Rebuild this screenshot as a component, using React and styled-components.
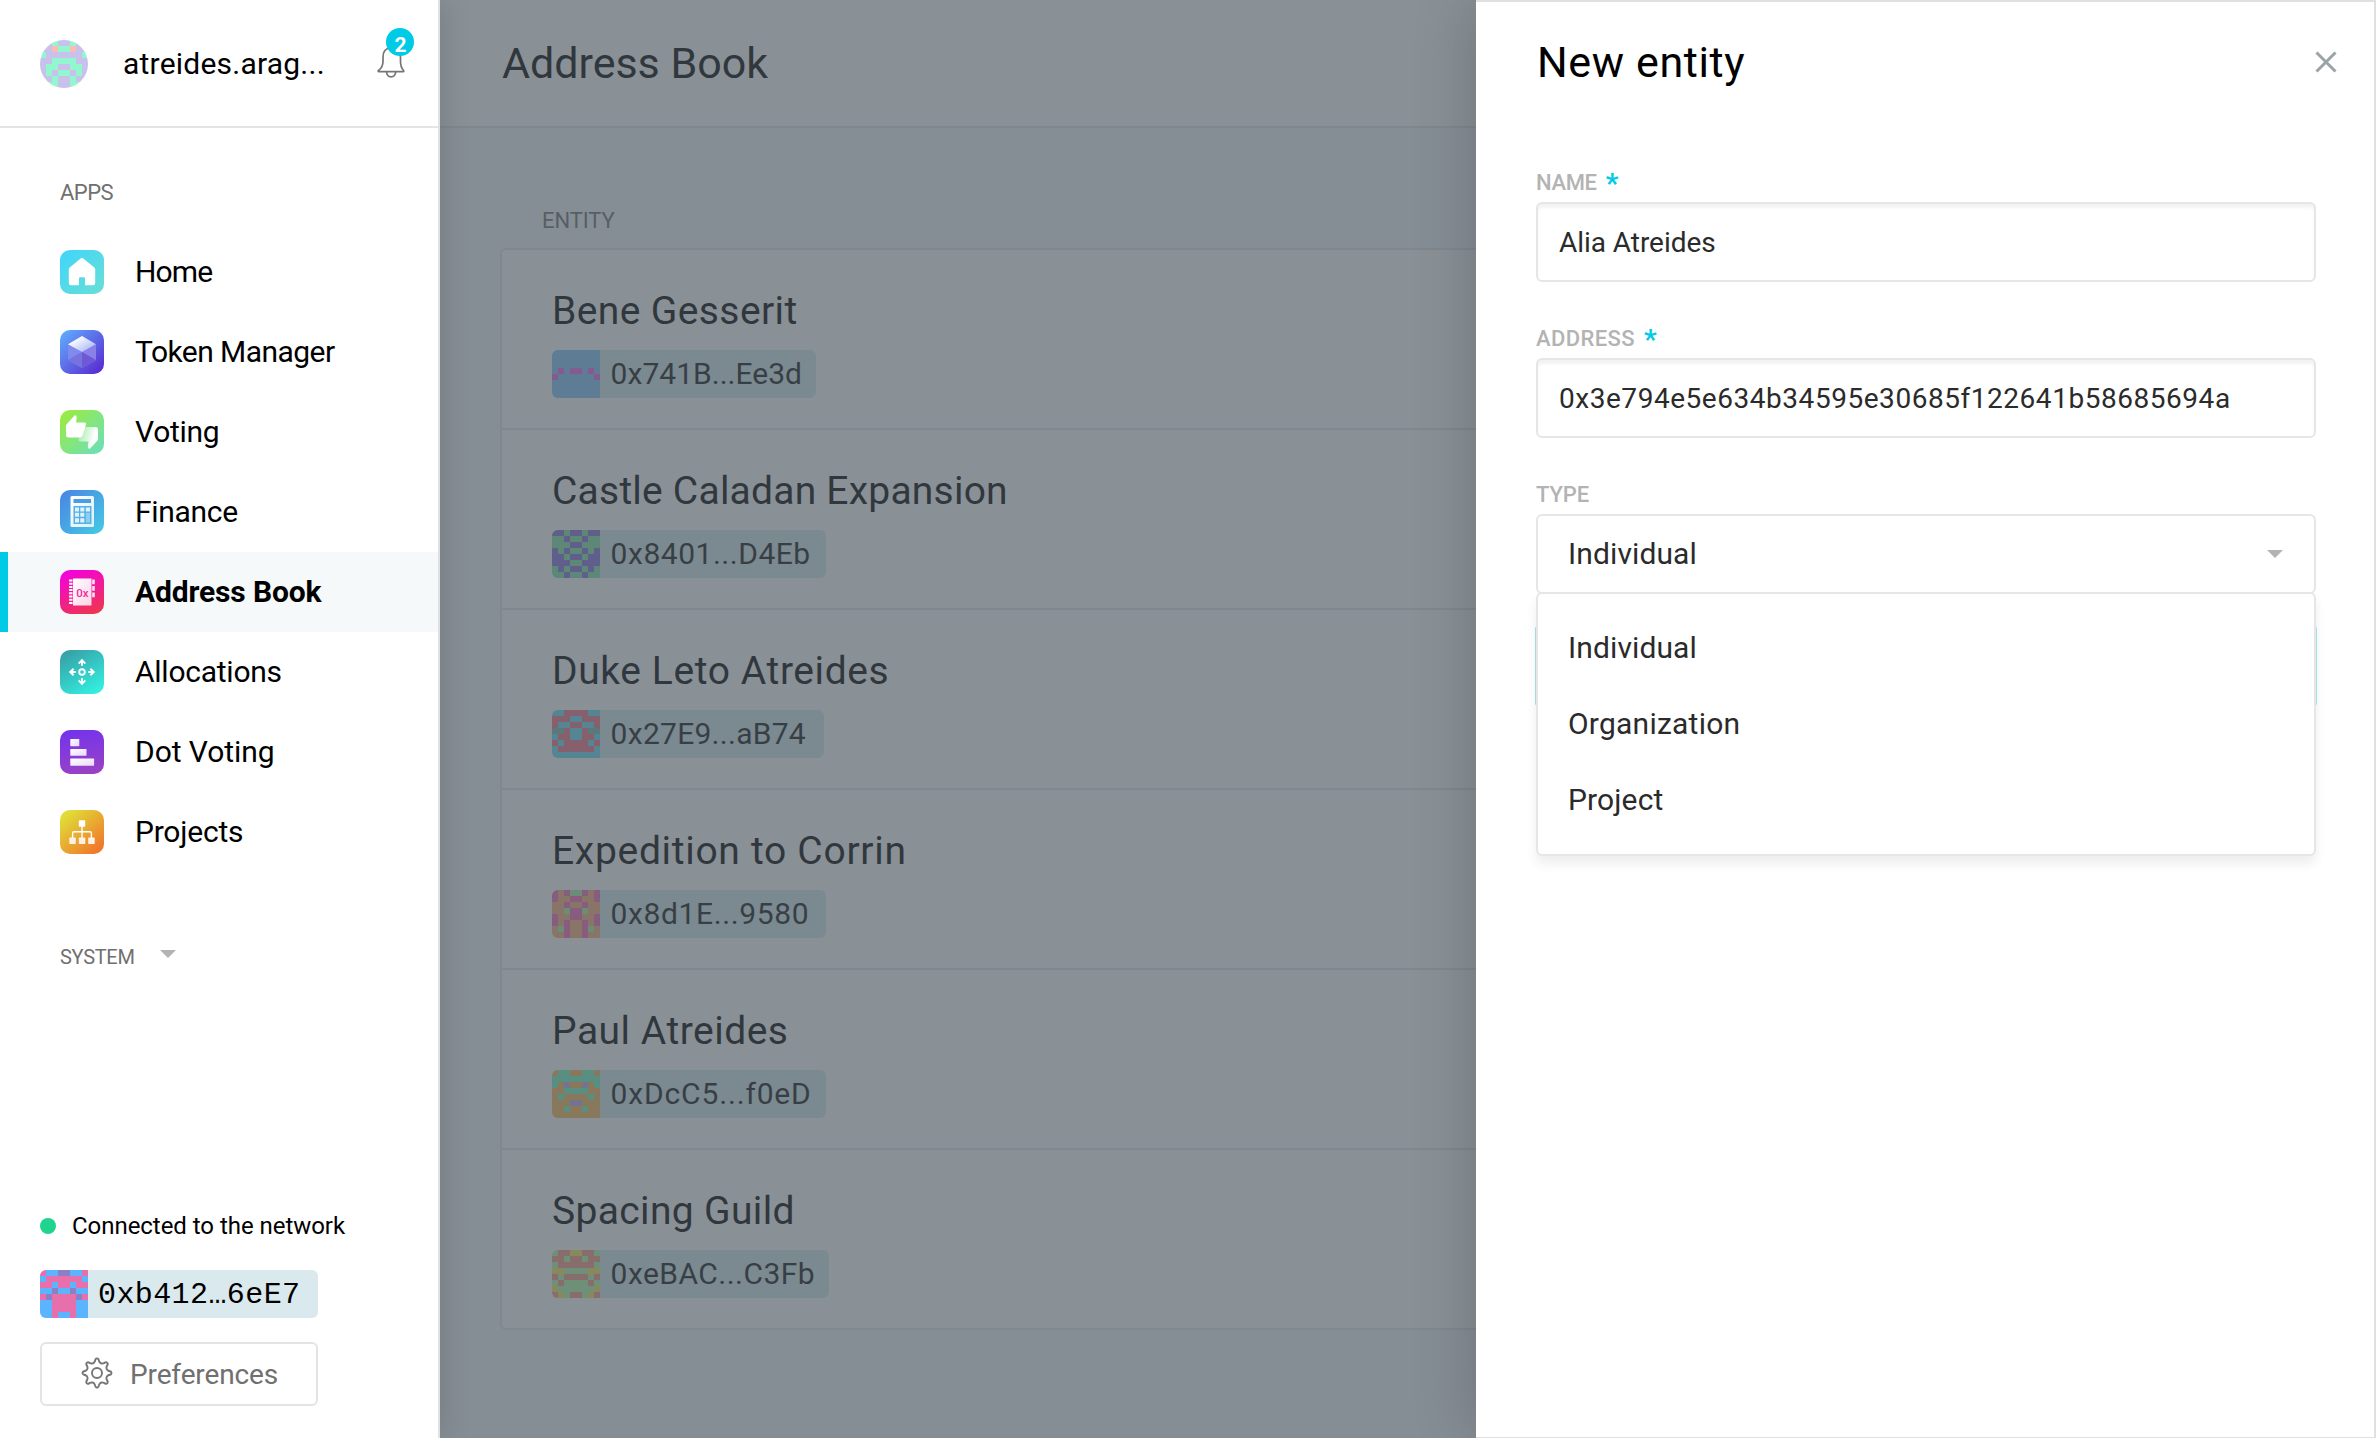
import React from "react";
import styled, { createGlobalStyle, css } from "styled-components";

const ACCENT = "#00cbe6";

const GlobalStyle = createGlobalStyle`
  * { box-sizing: border-box; }
  body {
    margin: 0;
    background: #fff;
    font-family: Roboto, "Liberation Sans", sans-serif;
    color: #000;
  }
`;

const Shell = styled.div`
  position: relative;
  display: flex;
  width: 2376px;
  height: 1438px;
  overflow: hidden;
`;

/* ---------- sidebar ---------- */

const Sidebar = styled.aside`
  position: relative;
  z-index: 2;
  flex: none;
  display: flex;
  flex-direction: column;
  width: 440px;
  background: #fff;
  border-right: 2px solid #dfe1e2;
  box-shadow: 2px 0 30px rgba(0, 0, 0, 0.13);
`;

const OrgBar = styled.header`
  flex: none;
  display: flex;
  align-items: center;
  height: 128px;
  padding: 2px 30px 0 40px;
  border-bottom: 2px solid #e3e4e4;
`;

const Avatar = styled.div`
  display: flex;
  width: 48px;
  height: 48px;
  margin-right: 35px;
  border-radius: 50%;
  overflow: hidden;
`;

const OrgName = styled.span`
  flex: 1;
  font-size: 30px;
  line-height: 40px;
  letter-spacing: 0.22px;
`;

const BellButton = styled.div`
  position: relative;
  display: flex;
  width: 30px;
  height: 34px;
  margin-right: 2px;
`;

const Count = styled.span`
  position: absolute;
  left: 10px;
  top: -19px;
  width: 28px;
  height: 28px;
  padding-top: 6px;
  padding-left: 1px;
  border-radius: 50%;
  background: ${ACCENT};
  color: #fff;
  font-size: 21px;
  font-weight: 700;
  line-height: 22px;
  text-align: center;
`;

const SectionTitle = styled.h2`
  display: flex;
  align-items: center;
  gap: 26px;
  margin: 0;
  padding-left: 60px;
  color: #707070;
  font-size: ${(p) => p.$size}px;
  font-weight: 400;
  line-height: 28px;
  letter-spacing: ${(p) => p.$ls}px;

  svg {
    margin: 0 0 7px -1px;
  }
`;

const AppsHead = styled.div`
  padding: 51px 0 25px;
`;

const SystemHead = styled.div`
  padding-top: 71px;
`;

const MenuItem = styled.a`
  display: flex;
  align-items: center;
  gap: 31px;
  height: 80px;
  padding-left: 60px;
  font-size: 30px;
  letter-spacing: ${(p) => p.$ls}px;
  ${(p) =>
    p.$active &&
    css`
      background: #f5f9fa;
      box-shadow: inset 8px 0 ${ACCENT};
      font-weight: 700;
    `}
`;

const MenuLabel = styled.span`
  padding-bottom: 2px;
`;

const Footer = styled.div`
  display: flex;
  flex-direction: column;
  align-items: flex-start;
  margin-top: auto;
  padding: 0 0 32px 40px;
`;

const Status = styled.div`
  display: flex;
  align-items: center;
  gap: 16px;
  height: 32px;
  font-size: 24px;
  letter-spacing: -0.04px;

  &::before {
    content: "";
    width: 16px;
    height: 16px;
    border-radius: 50%;
    background: #21d48e;
  }
`;

const Account = styled.div`
  display: flex;
  align-items: center;
  width: 278px;
  height: 48px;
  margin: 28px 0 24px;
  border-radius: 6px;
  overflow: hidden;
  background: #dae9ee;
  font-family: "Liberation Mono", monospace;
  font-size: 30px;
  letter-spacing: 0.4px;
`;

const AccountText = styled.span`
  padding: 2px 0 0 10px;
`;

const Preferences = styled.button`
  display: flex;
  align-items: center;
  gap: 17px;
  width: 278px;
  height: 64px;
  padding: 0 0 0 39px;
  border: 2px solid #e4e4e4;
  border-radius: 6px;
  background: #fff;
  color: #707070;
  font-family: inherit;
  font-size: 28px;
  letter-spacing: -0.13px;

  svg {
    margin-bottom: 2px;
  }
`;

/* ---------- main ---------- */

const Main = styled.main`
  position: relative;
  flex: 1;
  display: flex;
  flex-direction: column;
  background: #f7f9fb;
`;

const PageBar = styled.header`
  display: flex;
  align-items: center;
  height: 128px;
  padding-left: 62px;
  border-bottom: 2px solid #e3e7e7;
  background: #fff;
`;

const PageTitle = styled.h1`
  margin: 0;
  font-size: 43px;
  font-weight: 400;
  line-height: 60px;
  letter-spacing: -0.02px;
`;

const Listing = styled.section`
  padding: 77px 60px 0;
`;

const ColumnHead = styled.div`
  padding-left: 42px;
  height: 43px;
  color: #707070;
  font-size: 22px;
  line-height: 32px;
  letter-spacing: -0.1px;
`;

const Table = styled.div`
  border: 2px solid #e3e7e7;
  border-radius: 6px;
  background: #fff;
`;

const Entity = styled.div`
  display: flex;
  flex-direction: column;
  align-items: flex-start;
  height: 178px;
  padding: 37px 0 0 50px;

  & + & {
    height: 180px;
    border-top: 2px solid #e3e7e7;
  }
`;

const EntityName = styled.div`
  height: 63px;
  font-size: 39px;
  line-height: 48px;
  letter-spacing: ${(p) => p.$ls}px;
`;

const Badge = styled.div`
  display: flex;
  align-items: center;
  width: ${(p) => p.$w}px;
  height: 48px;
  border-radius: 6px;
  overflow: hidden;
  background: #d8eaee;
  color: #161616;
  font-size: 30px;
  letter-spacing: ${(p) => p.$ls}px;
  white-space: nowrap;
`;

const BadgeText = styled.span`
  padding: 0 0 2px 10.6px;
`;

const Backdrop = styled.div`
  position: absolute;
  inset: 0;
  background: rgba(74, 85, 94, 0.65);
`;

/* ---------- side panel ---------- */

const Panel = styled.section`
  position: absolute;
  z-index: 3;
  top: 0;
  right: 0;
  bottom: 0;
  width: 900px;
  padding: 0 58px 0 60px;
  background: #fff;
  border: solid #dfe0e1;
  border-width: 2px 2px 1px 0;
  box-shadow: 0 0 60px rgba(0, 0, 0, 0.2);
`;

const PanelBar = styled.header`
  display: flex;
  align-items: center;
  justify-content: space-between;
  height: 122px;
  margin: 0 -21px 0 1px;
  padding-bottom: 2px;
`;

const PanelTitle = styled.h2`
  margin: 0;
  font-size: 43px;
  font-weight: 400;
  line-height: 60px;
  letter-spacing: 0.63px;
`;

const Field = styled.div`
  position: relative;
  margin-top: ${(p) => p.$top}px;
`;

const Label = styled.label`
  display: flex;
  gap: 9px;
  height: 36px;
  padding: 2px 0 0;
  color: #b3b3b3;
  font-size: 22px;
  font-weight: 500;
  line-height: 30px;
  letter-spacing: ${(p) => p.$ls}px;
`;

const Required = styled.span`
  color: ${ACCENT};
  font-size: 28px;
  font-weight: 700;
  line-height: 32px;
`;

const Input = styled.div`
  display: flex;
  align-items: center;
  width: 780px;
  height: 80px;
  padding-left: 21px;
  border: 2px solid #e6e6e6;
  border-radius: 6px;
  background: #fff;
  box-shadow: inset 0 4px 3px rgba(0, 0, 0, 0.05);
  color: #2b2b2b;
  font-size: 28px;
  letter-spacing: ${(p) => p.$ls}px;
`;

const Select = styled.div`
  display: flex;
  align-items: center;
  justify-content: space-between;
  width: 780px;
  height: 80px;
  padding: 0 31px 1px 30px;
  border: 2px solid #e6e6e6;
  border-radius: 6px;
  background: #fff;
  color: #2b2b2b;
  font-size: 30px;
  letter-spacing: 0.11px;
`;

const Menu = styled.ul`
  position: absolute;
  left: 0;
  top: 114px;
  width: 780px;
  height: 264px;
  margin: 0;
  padding: 16px 0 0 30px;
  border: 2px solid #e6e6e6;
  border-radius: 6px;
  background: #fff;
  box-shadow: 0 8px 12px rgba(0, 0, 0, 0.07);
  list-style: none;
`;

const Option = styled.li`
  color: #2b2b2b;
  font-size: 30px;
  line-height: 76px;
  letter-spacing: ${(p) => p.$ls}px;
`;

const Submit = styled.div`
  height: 80px;
  margin: 32px -1px 0;
  border-radius: 3px;
  background: linear-gradient(130deg, #b0dfe8, #a0eced);
`;

/* ---------- drawings ---------- */

function Identicon({ rows, colors }) {
  return (
    <svg width="48" height="48" viewBox="0 0 48 48" shapeRendering="crispEdges">
      {rows.map((row, y) =>
        [...row, ...[...row].reverse()].map((c, x) => (
          <rect key={`${x}-${y}`} x={x * 6} y={y * 6} width="6" height="6" fill={colors[c]} />
        ))
      )}
    </svg>
  );
}

const Caret = () => (
  <svg width="16" height="8" viewBox="0 0 16 8">
    <path d="M0 0h16l-8 8z" fill="#b3b3b3" />
  </svg>
);

const Bell = () => (
  <svg width="30" height="34" viewBox="0 0 30 34" fill="none" stroke="#757575" strokeWidth="1.7" strokeLinejoin="round">
    <path d="M2.8 24.6h24.4c.6 0 .8-.7.4-1.100-2.600-2.400-3.100-5.500-3.100-9.200V10c0-5.200-3-9-8.200-9h-2.400C9.600 1.600 7 5 7 10v4.300c0 3.700-1.300 7-4.500 9.200-.6.400-.4 1.100.3 1.100z" />
    <path d="M10.500 24.800c.2 3 2 5 4.600 5s4.400-2 4.600-5" />
  </svg>
);

const gearPath = (() => {
  const shape = [
    [-22.5, 10.3],
    [-15, 10.9],
    [-9.5, 12],
    [-6.5, 14.1],
    [0, 14.6],
    [6.5, 14.1],
    [9.5, 12],
    [15, 10.9],
  ];
  const pts = [];
  for (let i = 0; i < 8; i++)
    shape.forEach(([a, r]) => {
      const t = ((i * 45 + a - 90) * Math.PI) / 180;
      pts.push([16 + r * Math.cos(t), 16 + r * Math.sin(t)]);
    });
  const mid = (p, q) => `${((p[0] + q[0]) / 2).toFixed(2)} ${((p[1] + q[1]) / 2).toFixed(2)}`;
  let d = `M${mid(pts[pts.length - 1], pts[0])}`;
  pts.forEach((p, i) => {
    d += `Q${p[0].toFixed(2)} ${p[1].toFixed(2)} ${mid(p, pts[(i + 1) % pts.length])}`;
  });
  return d + "z";
})();

const Gear = () => (
  <svg width="32" height="32" viewBox="0 0 32 32" fill="none" stroke="#757575" strokeWidth="1.9">
    <path d={gearPath} strokeLinejoin="round" />
    <circle cx="16" cy="16" r="5" />
  </svg>
);

const Cross = () => (
  <svg width="22" height="22" viewBox="0 0 22 22" stroke="#9aa3a8" strokeWidth="3">
    <path d="M1.500 1.500l19 19M20.500 1.500l-19 19" />
  </svg>
);

function AppTile({ id, from, to, dir = [0, 0, 1, 1], children }) {
  return (
    <svg width="44" height="44" viewBox="0 0 44 44">
      <defs>
        <linearGradient id={id} x1={dir[0]} y1={dir[1]} x2={dir[2]} y2={dir[3]}>
          <stop offset="0" stopColor={from} />
          <stop offset="1" stopColor={to} />
        </linearGradient>
        <linearGradient id={`${id}-w`} x1="0" y1="0" x2="1" y2="1">
          <stop offset="0" stopColor="#fff" />
          <stop offset="1" stopColor="#fff" stopOpacity=".8" />
        </linearGradient>
      </defs>
      <rect width="44" height="44" rx="10" fill={`url(#${id})`} />
      {children}
    </svg>
  );
}

const icons = {
  home: (
    <AppTile id="home" from="#3fd5fb" to="#6adfd5">
      <path d="M21 8.200q1-.9 2 0l11 9q1.200 1 1.200 2.400V33q0 2.200-2.200 2.200h-8V28.400q0-1.200-1.200-1.200h-3.600q-1.200 0-1.200 1.200v6.800h-8q-2.200 0-2.200-2.200V19.600q0-1.400 1.200-2.400z" fill="#fff" />
    </AppTile>
  ),
  token: (
    <AppTile id="token" from="#5fb2ff" to="#5a22cf">
      <defs>
        <linearGradient id="cube-top" x1=".2" y1=".2" x2=".85" y2=".8">
          <stop offset="0" stopColor="#fff" />
          <stop offset="1" stopColor="#fff" stopOpacity=".45" />
        </linearGradient>
      </defs>
      <path d="M8 14.200L22 22v16L8 30z" fill="#8089ec" />
      <path d="M36 14.200L22 22v16l14-8z" fill="#8b7fe8" />
      <path d="M22 22L8 30l14 8z" fill="#7672de" />
      <path d="M22 22l14 8-14 8z" fill="#6e58d5" />
      <path d="M22 6l14 8.200L22 22 8 14.200z" fill="#6f85f0" />
      <path d="M22 6l14 8.200L22 22 8 14.200z" fill="url(#cube-top)" />
    </AppTile>
  ),
  voting: (
    <AppTile id="voting" from="#9fec38" to="#68dfc0">
      <defs>
        <linearGradient id="thumb" x1="0" y1=".3" x2="1" y2=".6">
          <stop offset="0" stopColor="#fff" stopOpacity=".3" />
          <stop offset=".8" stopColor="#fff" />
        </linearGradient>
      </defs>
      <path d="M18.500 29.500L24.500 17h11q2.500 0 2.500 2.500V30l-8.500 9q-2-.6-1.700-2.800l.7-4.700H20q-2 0-1.500-2z" fill="url(#thumb)" />
      <path d="M6 15l9-10q2 .7 1.700 2.700L16 12.500h8.500q2 0 1.500 2L22.500 25.500Q22 27.500 20 27.500H8.500Q6 27.500 6 25z" fill="#fff" />
    </AppTile>
  ),
  finance: (
    <AppTile id="finance" from="#4a83e4" to="#44cbe4">
      <rect x="10.500" y="6" width="23.500" height="31" rx="1.500" fill="url(#finance-w)" />
      <rect x="13.500" y="9" width="17.500" height="4" fill="#4a9ce6" />
      <rect x="13.500" y="16" width="18" height="18" fill="#55b0e6" />
      <g fill="#dff2fb">
        <path d="M15 17.500h4v4h-4zM20.300 17.500h4v4h-4zM25.800 17.500h4.200v4h-4.200zM15 22.800h4v4h-4zM20.300 22.800h4v4h-4zM15 28.300h4v4.200h-4zM20.300 28.300h4v4.200h-4z" />
      </g>
      <path d="M25.800 22.800h4.200v9.700h-4.200z" fill="#8bd0ee" />
    </AppTile>
  ),
  book: (
    <AppTile id="book" from="#f402da" to="#ee3552" dir={[0.3, 0, 0.7, 1]}>
      <rect x="13" y="8.500" width="18.500" height="27" fill="url(#book-w)" />
      <path d="M10.800 9.500v25" stroke="#fff" strokeWidth="3.400" strokeDasharray="2 1.200" />
      <path d="M33.500 9.500v4.700M33.500 16v4.700M33.500 22.500v4.700" stroke="#fde3ec" strokeWidth="2.600" />
      <text x="22.300" y="27" textAnchor="middle" fontFamily="Roboto, sans-serif" fontSize="11.500" fontWeight="500" fill="#f02a9a">
        0x
      </text>
    </AppTile>
  ),
  allocations: (
    <AppTile id="alloc" from="#37a0a8" to="#33f0e0" dir={[0.2, 0, 0.8, 1]}>
      <g fill="none" stroke="#fff" strokeWidth="1.900">
        <circle cx="22" cy="22" r="2.800" />
        {[0, 90, 180, 270].map((a) => (
          <path key={a} transform={`rotate(${a} 22 22)`} d="M22 15.800v-5M18.700 13.600L22 10.200l3.300 3.400" />
        ))}
      </g>
    </AppTile>
  ),
  dots: (
    <AppTile id="dots" from="#7433ec" to="#9a42c4" dir={[0.4, 0, 0.6, 1]}>
      <g fill="url(#dots-w)">
        <rect x="10.300" y="9" width="9" height="7.200" rx=".6" />
        <rect x="10.300" y="19" width="16.200" height="6.800" rx=".6" />
        <rect x="10.300" y="28.600" width="23.800" height="7.200" rx=".6" />
      </g>
    </AppTile>
  ),
  projects: (
    <AppTile id="proj" from="#e0dc36" to="#f07a2c" dir={[0.15, 0.1, 0.85, 0.9]}>
      <path d="M22 15v13M12.600 28v-4.800q0-1.500 1.500-1.500h15.800q1.500 0 1.500 1.500V28" fill="none" stroke="#fff" strokeWidth="1.400" />
      <rect x="18.800" y="10.300" width="6.400" height="6.400" rx=".8" fill="#fff" />
      <g fill="#fdf1e4">
        <rect x="9.300" y="27.500" width="6.500" height="6.500" rx=".8" />
        <rect x="18.800" y="27.500" width="6.500" height="6.500" rx=".8" />
        <rect x="28.200" y="27.500" width="6.500" height="6.500" rx=".8" />
      </g>
    </AppTile>
  ),
};

/* ---------- data ---------- */

const apps = [
  { name: "Home", icon: "home", ls: -0.84 },
  { name: "Token Manager", icon: "token", ls: -0.55 },
  { name: "Voting", icon: "voting", ls: -0.3 },
  { name: "Finance", icon: "finance", ls: -0.3 },
  { name: "Address Book", icon: "book", ls: -0.15, active: true },
  { name: "Allocations", icon: "allocations", ls: -0.25 },
  { name: "Dot Voting", icon: "dots", ls: -0.06 },
  { name: "Projects", icon: "projects", ls: -0.22 },
];

const orgIcon = {
  rows: ["LLML", "LLPM", "MLLL", "LLMM", "LMML", "LMLM", "LLML", "LMML"],
  colors: { L: "#c8c1ec", M: "#94f6cf", P: "#fdb9b3" },
};

const accountIcon = {
  rows: ["KBBV", "BKKK", "KKBK", "BBVB", "KVKK", "BBKK", "BBKK", "BBKB"],
  colors: { B: "#5cb4ff", K: "#e770ac", V: "#8a81c4" },
};

const entities = [
  {
    name: "Bene Gesserit", ls: 0.39, address: "0x741B...Ee3d", als: 0.02, w: 264,
    rows: ["AAAA", "AAAA", "AAAA", "APAP", "PAAA", "AAAA", "AAAA", "AAAA"],
    colors: { A: "#83c6fa", P: "#f264f0" },
  },
  {
    name: "Castle Caladan Expansion", ls: 0.22, address: "0x8401...D4Eb", als: 0.52, w: 274,
    rows: ["PPGP", "GGPG", "GGGP", "PGPG", "PPGP", "PPPG", "GPGP", "GGPG"],
    colors: { G: "#80e5a4", P: "#8972df" },
  },
  {
    name: "Duke Leto Atreides", ls: 0.6, address: "0x27E9...aB74", als: 0.27, w: 272,
    rows: ["BBRR", "RRRB", "RBBR", "OORB", "BRRB", "RBRR", "BRRR", "BBBB"],
    colors: { R: "#fa7589", B: "#6ce0f6", O: "#7ebdae" },
  },
  {
    name: "Expedition to Corrin", ls: 0.7, address: "0x8d1E...9580", als: 0.62, w: 274,
    rows: ["MBMG", "MBBM", "BBMB", "BBGM", "MBBM", "MBMB", "BGMB", "BBMB"],
    colors: { B: "#ffb27c", M: "#fb6abb", G: "#a8f5a8" },
  },
  {
    name: "Paul Atreides", ls: 0.5, address: "0xDcC5...f0eD", als: 0.84, w: 274,
    rows: ["BGGB", "GGGG", "GBPB", "BBGG", "BGBB", "BBBP", "BBGB", "BBBB"],
    colors: { B: "#fcbc5a", G: "#72fcc0", P: "#c4abee" },
  },
  {
    name: "Spacing Guild", ls: 0.35, address: "0xeBAC...C3Fb", als: 0.46, w: 277,
    rows: ["GRRY", "RRGR", "GRRR", "YYGG", "RGRR", "GRGG", "YGGG", "RYGR"],
    colors: { G: "#b4fbaa", R: "#f89a84", Y: "#fae856" },
  },
];

const options = [
  { name: "Individual", ls: 0.11 },
  { name: "Organization", ls: 0.23 },
  { name: "Project", ls: 0.13 },
];

export default function App() {
  return (
    <Shell>
      <GlobalStyle />
      <Sidebar>
        <OrgBar>
          <Avatar>
            <Identicon {...orgIcon} />
          </Avatar>
          <OrgName>atreides.arag...</OrgName>
          <BellButton>
            <Bell />
            <Count>2</Count>
          </BellButton>
        </OrgBar>
        <AppsHead>
          <SectionTitle $size={22} $ls={-0.5}>APPS</SectionTitle>
        </AppsHead>
        <nav>
          {apps.map((a) => (
            <MenuItem key={a.name} $active={a.active} $ls={a.ls}>
              {icons[a.icon]}
              <MenuLabel>{a.name}</MenuLabel>
            </MenuItem>
          ))}
        </nav>
        <SystemHead>
          <SectionTitle $size={20} $ls={-0.3}>
            SYSTEM <Caret />
          </SectionTitle>
        </SystemHead>
        <Footer>
          <Status>Connected to the network</Status>
          <Account>
            <Identicon {...accountIcon} />
            <AccountText>0xb412…6eE7</AccountText>
          </Account>
          <Preferences>
            <Gear />
            Preferences
          </Preferences>
        </Footer>
      </Sidebar>

      <Main>
        <PageBar>
          <PageTitle>Address Book</PageTitle>
        </PageBar>
        <Listing>
          <ColumnHead>ENTITY</ColumnHead>
          <Table>
            {entities.map((e) => (
              <Entity key={e.name}>
                <EntityName $ls={e.ls}>{e.name}</EntityName>
                <Badge $w={e.w} $ls={e.als}>
                  <Identicon rows={e.rows} colors={e.colors} />
                  <BadgeText>{e.address}</BadgeText>
                </Badge>
              </Entity>
            ))}
          </Table>
        </Listing>
        <Backdrop />
      </Main>

      <Panel>
        <PanelBar>
          <PanelTitle>New entity</PanelTitle>
          <Cross />
        </PanelBar>
        <Field $top={42}>
          <Label $ls={-0.34}>
            NAME <Required>*</Required>
          </Label>
          <Input $ls={-0.05}>Alia Atreides</Input>
        </Field>
        <Field $top={40}>
          <Label $ls={0.4}>
            ADDRESS <Required>*</Required>
          </Label>
          <Input $ls={0.54}>0x3e794e5e634b34595e30685f122641b58685694a</Input>
        </Field>
        <Field $top={40}>
          <Label $ls={-0.1}>TYPE</Label>
          <Select>
            Individual <Caret />
          </Select>
          <Menu>
            {options.map((o) => (
              <Option key={o.name} $ls={o.ls}>
                {o.name}
              </Option>
            ))}
          </Menu>
        </Field>
        <Submit />
      </Panel>
    </Shell>
  );
}
